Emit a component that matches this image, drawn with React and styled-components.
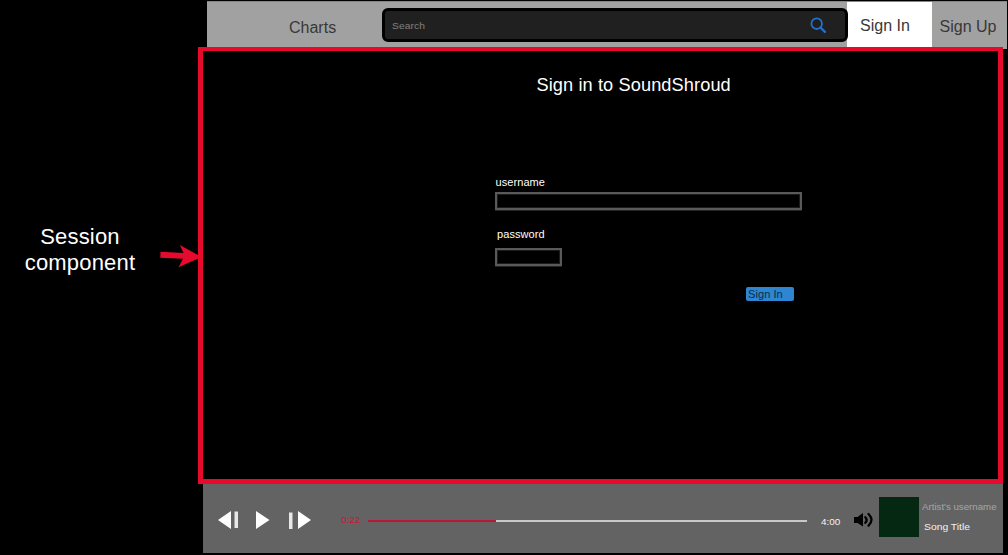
import React from "react";
import styled, { createGlobalStyle } from "styled-components";

const GlobalStyle = createGlobalStyle`
  * { box-sizing: border-box; }
  body {
    margin: 0;
    background: #000;
    font-family: "Liberation Sans", Arial, sans-serif;
    overflow: hidden;
  }
`;

const Page = styled.div`
  display: grid;
  grid-template-columns: 198px 810px;
  width: 1008px;
  height: 555px;
  background: #000;
`;

const Annotation = styled.aside`
  display: flex;
  align-items: flex-start;
  padding: 224px 0 0 20px;
`;

const AnnotationText = styled.p`
  flex: none;
  width: 120px;
  margin: 0;
  color: #fff;
  font-size: 22px;
  line-height: 26px;
  letter-spacing: 0.17px;
  text-align: center;
`;

const Arrow = styled.svg`
  flex: none;
  width: 44px;
  height: 26px;
  margin: 20px 0 0 19px;
  z-index: 2;
`;

const Column = styled.div`
  display: flex;
  flex-direction: column;
  padding-top: 1px;
`;

const TopBar = styled.header`
  display: flex;
  flex: none;
  width: 800px;
  height: 48px;
  margin-left: 9px;
  background: #a1a1a1;
  border-top: 1px solid #858585;
`;

const ChartsLink = styled.a`
  width: 175px;
  padding: 17px 0 0 82px;
  color: #383838;
  font-size: 16px;
  line-height: 18px;
`;

const SearchBox = styled.label`
  display: flex;
  align-items: center;
  justify-content: space-between;
  width: 466px;
  height: 34px;
  margin: 6px -1px 0 0;
  padding: 0 18px 0 7px;
  background: #202020;
  border: 3px solid #000;
  border-radius: 6px;
  z-index: 1;
`;

const SearchInput = styled.input`
  width: 200px;
  padding: 0;
  border: 0;
  outline: 0;
  background: transparent;
  color: #808080;
  font: 9.5px "Liberation Sans", Arial, sans-serif;
  letter-spacing: 0.1px;
  transform: scaleX(1.08);
  transform-origin: left;
  &::placeholder { color: #808080; opacity: 1; }
`;

const SearchIcon = styled.svg`
  width: 17px;
  height: 17px;
`;

const NavTab = styled.a`
  width: ${(p) => p.$width}px;
  padding: ${(p) => p.$top}px 0 0 ${(p) => p.$left}px;
  color: #383838;
  background: ${(p) => (p.$active ? "#fff" : "transparent")};
  font-size: 16px;
  line-height: 18px;
  white-space: nowrap;
`;

const Session = styled.main`
  flex: none;
  width: 805px;
  height: 437px;
  margin-top: -2px;
  background: #000;
  border: 5px solid #e60a2c;
  border-top-width: 4px;
  z-index: 1;
`;

const Title = styled.h1`
  margin: 23px 0 0 333.5px;
  color: #fff;
  font-size: 18.2px;
  font-weight: 400;
  line-height: 22px;
  letter-spacing: 0.1px;
`;

const Form = styled.form`
  display: flex;
  flex-direction: column;
  width: 307px;
  margin: 80px 0 0 292px;
`;

const FieldLabel = styled.label`
  margin: ${(p) => p.$top}px 0 ${(p) => p.$gap}px ${(p) => p.$left}px;
  color: #fff;
  font-size: 11px;
  line-height: 13px;
  letter-spacing: 0.08px;
`;

const Field = styled.input`
  width: ${(p) => p.$width}px;
  height: 18px;
  padding: 0 4px;
  background: #000;
  color: #fff;
  border: 2px solid #595959;
  border-radius: 0;
  outline: 0;
  box-shadow: 0 1px 0 #222, inset 0 0 0 1px #1c1c1c;
`;

const Submit = styled.button`
  align-self: flex-end;
  width: 48px;
  height: 14px;
  margin: 21px 8px 0 0;
  padding: 0 0 0 2px;
  border: 0;
  border-radius: 2px;
  background: #2e86d2;
  color: #082c4b;
  font: 11px/14px "Liberation Sans", Arial, sans-serif;
  letter-spacing: 0.08px;
  text-align: left;
`;

const Player = styled.footer`
  display: flex;
  flex: none;
  align-items: flex-start;
  width: 800px;
  height: 69px;
  margin-left: 5px;
  background: #636363;
`;

const Controls = styled.svg`
  flex: none;
  width: 94px;
  height: 20px;
  margin: 26px 0 0 15px;
`;

const Time = styled.span`
  flex: none;
  width: 20px;
  margin: ${(p) => p.$top}px 0 0 ${(p) => p.$left}px;
  color: ${(p) => p.$color};
  font-size: 9.5px;
  line-height: 12px;
  transform: scaleX(1.05);
  transform-origin: left;
`;

const Track = styled.div`
  flex: none;
  width: 439px;
  height: 2px;
  margin: 36px 0 0 7px;
  background: #c8c8c8;
`;

const Progress = styled.div`
  height: 2px;
  background: #b81735;
`;

const VolumeIcon = styled.svg`
  flex: none;
  width: 21px;
  height: 16px;
  margin: 28px 5px 0 12px;
`;

const Cover = styled.div`
  flex: none;
  width: 40px;
  height: 40px;
  margin-top: 13px;
  background: #042812;
`;

const SongInfo = styled.div`
  display: flex;
  flex-direction: column;
  padding: 17px 0 0 3px;
  white-space: nowrap;
`;

const Artist = styled.span`
  color: #a6a6a6;
  font-size: 9.5px;
  line-height: 12px;
  transform: scaleX(1.02);
  transform-origin: left;
`;

const Song = styled.span`
  margin: 8px 0 0 2px;
  color: #f2f2f2;
  font-size: 9.5px;
  line-height: 12px;
  transform: scaleX(1.09);
  transform-origin: left;
`;

export default function App() {
  const progress = 128 / 439;
  return (
    <>
      <GlobalStyle />
      <Page>
        <Annotation>
          <AnnotationText>Session component</AnnotationText>
          <Arrow viewBox="0 0 44 26">
            <path d="M1.5 7.8L24.5 9L20.8 1L42.5 13L19.5 23.3L24 14.8L1.3 13.8Z" fill="#e60a2c" />
          </Arrow>
        </Annotation>
        <Column>
          <TopBar>
            <ChartsLink>Charts</ChartsLink>
            <SearchBox>
              <SearchInput placeholder="Search" />
              <SearchIcon viewBox="0 0 17 17" fill="none" stroke="#2471c9" strokeLinecap="round">
                <circle cx="6.7" cy="6.7" r="5.3" strokeWidth="1.8" />
                <path d="M10.7 10.7L14.9 14.9" strokeWidth="2.3" />
              </SearchIcon>
            </SearchBox>
            <NavTab $width={85} $top={15} $left={13} $active>Sign In</NavTab>
            <NavTab $width={75} $top={16} $left={7.5}>Sign Up</NavTab>
          </TopBar>
          <Session>
            <Title>Sign in to SoundShroud</Title>
            <Form>
              <FieldLabel htmlFor="username" $top={0} $gap={3} $left={0.5}>username</FieldLabel>
              <Field id="username" $width={307} />
              <FieldLabel htmlFor="password" $top={18} $gap={7} $left={2}>password</FieldLabel>
              <Field id="password" type="password" $width={67} />
              <Submit type="button">Sign In</Submit>
            </Form>
          </Session>
          <Player>
            <Controls viewBox="0 0 94 20">
              <path d="M0 10L13 1V19ZM38 1L51.5 10L38 19ZM80 1L93 10L80 19Z" fill="#fff" />
              <path d="M16.5 1.5H20V18H16.5ZM71 2.5H74.5V19H71Z" fill="#e8e8e8" />
            </Controls>
            <Time $top={30} $left={29} $color="#c51736">0:22</Time>
            <Track>
              <Progress style={{ width: `${progress * 100}%` }} />
            </Track>
            <Time $top={32} $left={14} $color="#f2f2f2">4:00</Time>
            <VolumeIcon viewBox="0 0 21 16">
              <path d="M1 5H4.5L10 1V14.5L4.5 11H1Z" fill="#000" />
              <path d="M12.3 5.2Q15 8 12.3 10.8M15.5 2Q21.5 7.8 15.5 13.8" fill="none" stroke="#000" strokeWidth="2.3" strokeLinecap="round" />
            </VolumeIcon>
            <Cover />
            <SongInfo>
              <Artist>Artist's username</Artist>
              <Song>Song Title</Song>
            </SongInfo>
          </Player>
        </Column>
      </Page>
    </>
  );
}
